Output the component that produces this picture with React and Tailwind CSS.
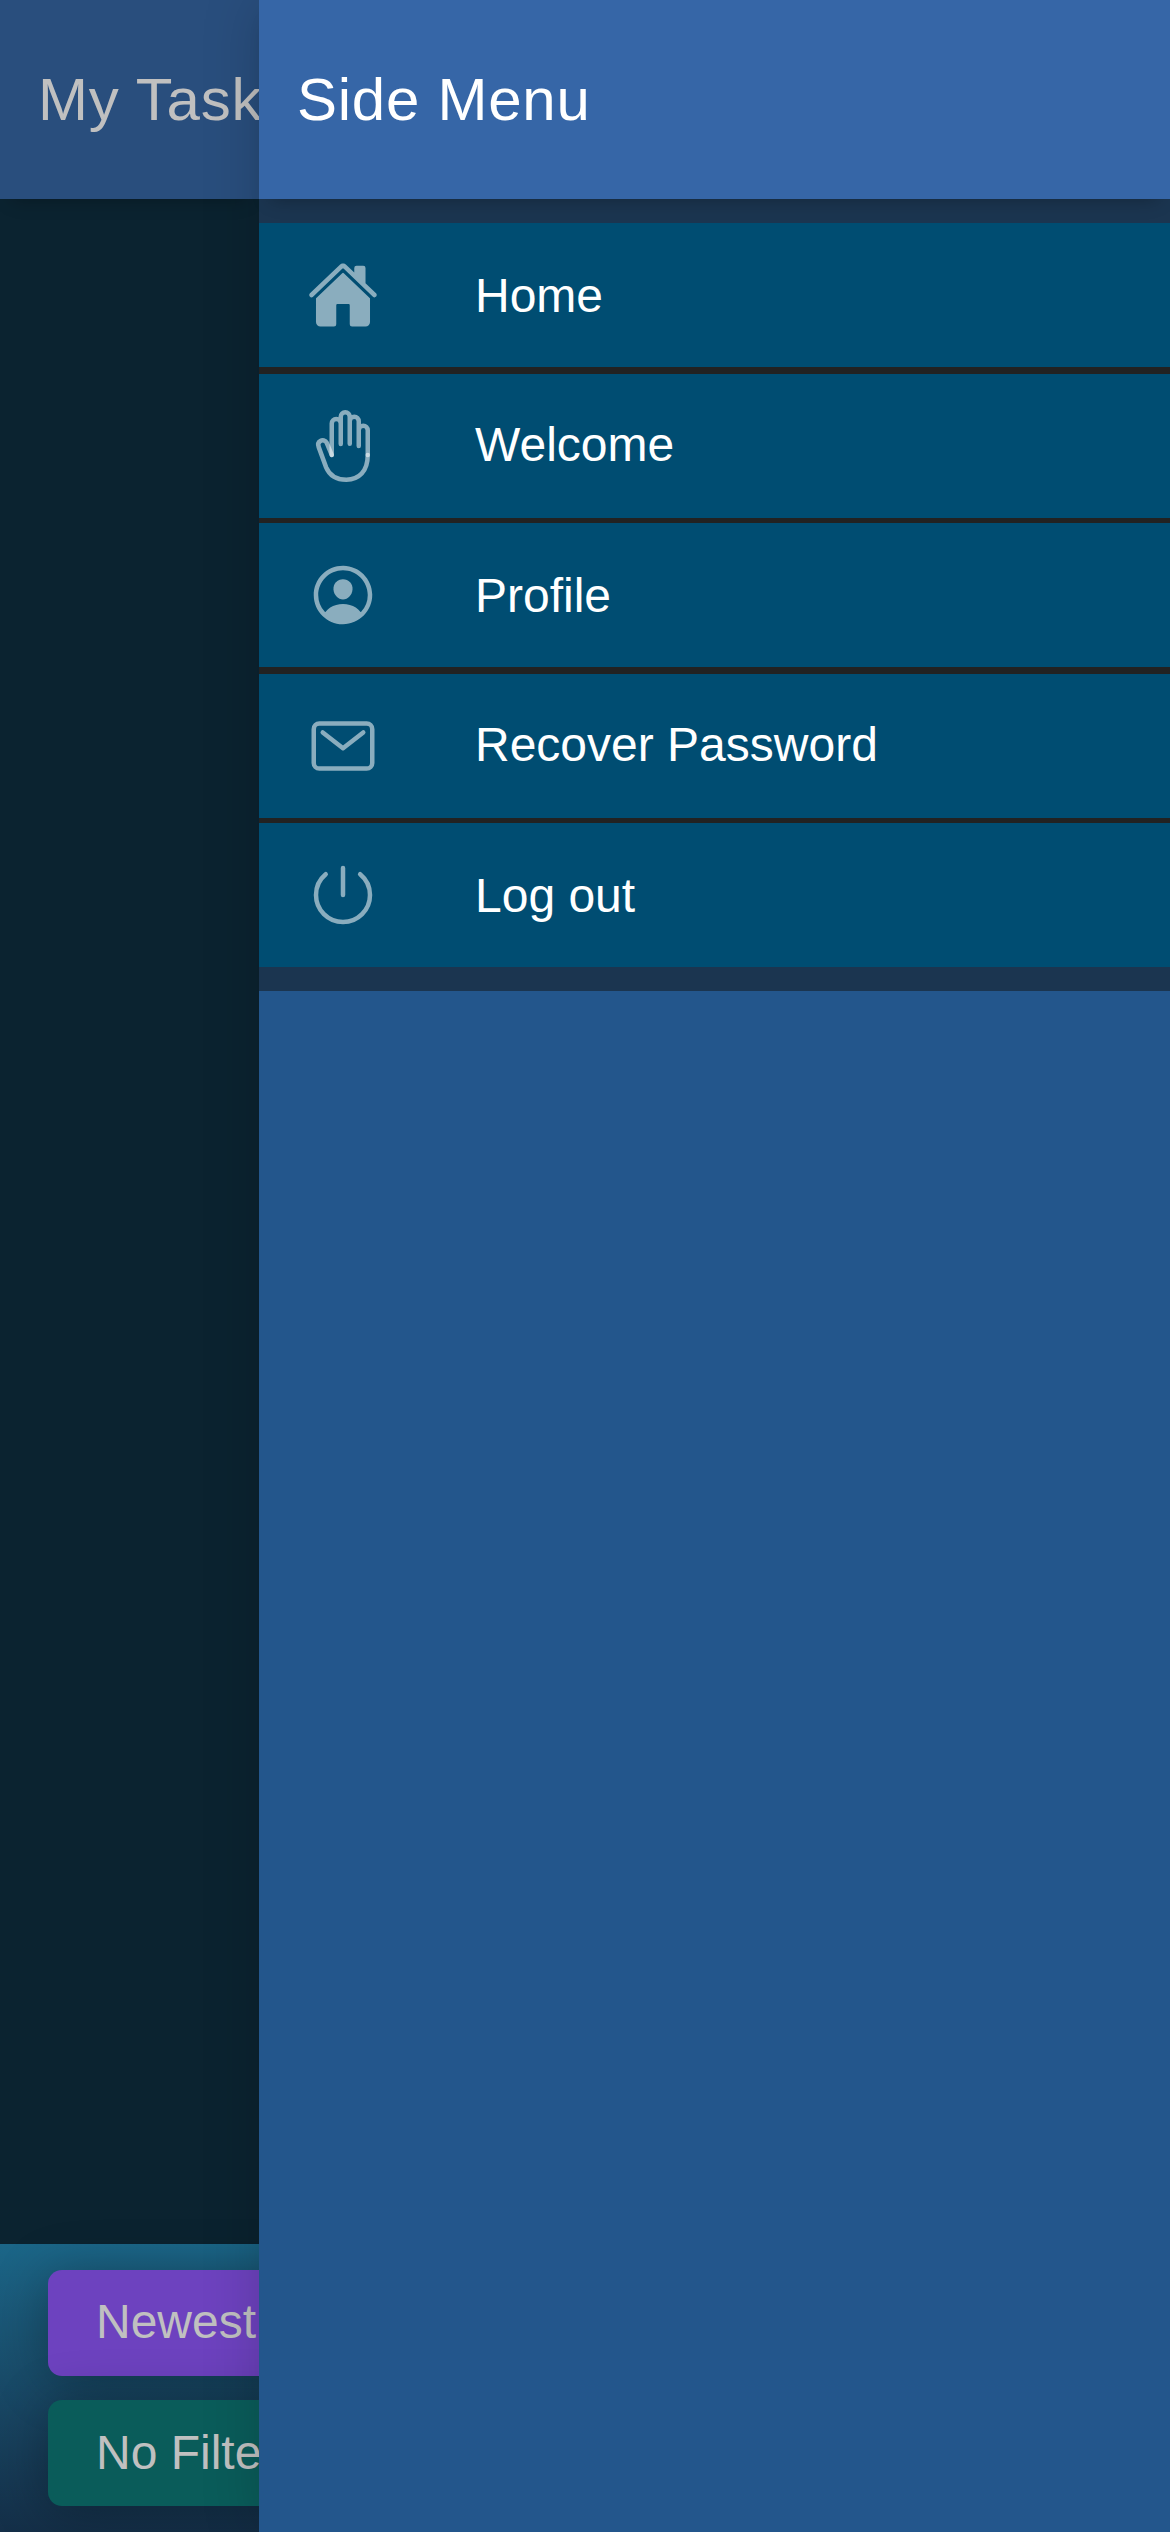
import React from "react";
import {
  IoHome,
  IoHandRightOutline,
  IoPersonCircleOutline,
  IoMailOutline,
  IoPowerOutline,
} from "react-icons/io5";

const items = [
  { label: "Home", Icon: IoHome, edge: "border-b-[7px]", text: "pt-0.5" },
  { label: "Welcome", Icon: IoHandRightOutline, edge: "border-b-[5px]", text: "pb-0.5" },
  { label: "Profile", Icon: IoPersonCircleOutline, edge: "border-b-[7px]", text: "pt-0.5" },
  { label: "Recover Password", Icon: IoMailOutline, edge: "border-b-[5px]", text: "pb-0.5" },
  { label: "Log out", Icon: IoPowerOutline, edge: "border-b-0", text: "pt-0.5" },
];

function Title({ children, className }) {
  return (
    <header className={`relative z-10 flex h-[199px] shrink-0 items-center whitespace-nowrap pl-[38px] text-[60px] leading-[72px] tracking-[0.75px] shadow-[0_12px_18px_-12px_rgba(0,0,0,0.3)] ${className}`}>
      <h1>{children}</h1>
    </header>
  );
}

function TaskPage() {
  return (
    <main className="flex h-full w-[259px] shrink-0 flex-col overflow-hidden bg-[#0b2330] text-[#c0c0c0]">
      <Title className="bg-[#294e7d]">My Tasks</Title>
      <div className="flex-1" />
      <footer className="flex h-[288px] w-[1170px] flex-col gap-6 bg-linear-to-b from-[#1b6688] to-[#142f48] pl-12 pt-[26px] text-[48px]">
        <button className="h-[106px] w-[1074px] rounded-[14px] bg-[#6d42bf] pb-[3px] pl-12 text-left leading-[103px] shadow-[0_6px_54px_rgba(0,0,0,0.32)]">Newest First</button>
        <button className="h-[106px] w-[1074px] rounded-[14px] bg-[#0a5c5a] pl-12 text-left leading-[106px] shadow-[0_6px_54px_rgba(0,0,0,0.32)]">No Filter</button>
      </footer>
    </main>
  );
}

function SideMenu() {
  return (
    <aside className="relative z-20 flex h-full flex-1 flex-col bg-[#23568c] text-white shadow-[0_0_54px_rgba(0,0,0,0.18)]">
      <Title className="bg-[#3666a7]">Side Menu</Title>
      <nav className="bg-[#1b3550] py-6">
        {items.map(({ label, Icon, edge, text }) => (
          <a key={label} className={`box-content flex h-36 items-center gap-24 border-[#222222] bg-[#004d72] pl-12 ${edge}`}>
            <Icon className="size-[72px] shrink-0 text-white/54" />
            <span className={`text-[48px] leading-[58px] ${text}`}>{label}</span>
          </a>
        ))}
      </nav>
    </aside>
  );
}

export default function App() {
  return (
    <div className="flex h-[2532px] w-[1170px] overflow-hidden font-['Liberation_Sans',Arial,sans-serif]">
      <TaskPage />
      <SideMenu />
    </div>
  );
}
